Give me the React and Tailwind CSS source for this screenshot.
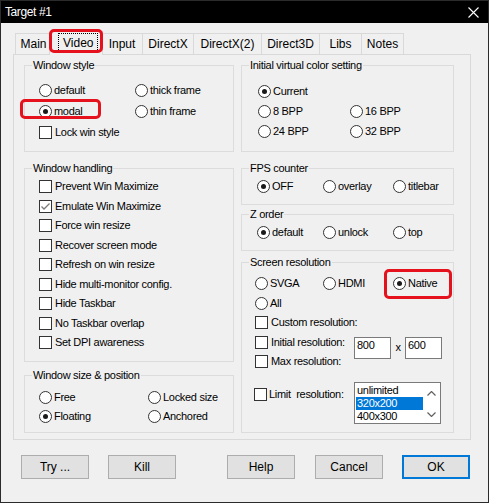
import React from 'react';

const tabs = ['Main', 'Video', 'Input', 'DirectX', 'DirectX(2)', 'Direct3D', 'Libs', 'Notes'];
const tabWidths = {
  Main: 'w-[36px]',
  Input: 'w-[41px]',
  DirectX: 'w-[51px]',
  'DirectX(2)': 'w-[68px]',
  Direct3D: 'w-[58px]',
  Libs: 'w-[42px]',
  Notes: 'w-[43px] border-r',
};

const handling = [
  ['Prevent Win Maximize', false],
  ['Emulate Win Maximize', true],
  ['Force win resize', false],
  ['Recover screen mode', false],
  ['Refresh on win resize', false],
  ['Hide multi-monitor config.', false],
  ['Hide Taskbar', false],
  ['No Taskbar overlap', false],
  ['Set DPI awareness', false],
];

function Radio({ on, label }) {
  return (
    <div className="flex items-center gap-[2px]">
      <span className="flex h-[13px] w-[13px] shrink-0 items-center justify-center rounded-full border border-[#333] bg-white">
        {on && <span className="h-[5px] w-[5px] rounded-full bg-[#1a1a1a]" />}
      </span>
      <span className="whitespace-pre">{label}</span>
    </div>
  );
}

function Check({ on, label, wide }) {
  return (
    <div className="flex items-center gap-[3px]">
      <span className="flex h-[13px] w-[13px] shrink-0 items-center justify-center border border-[#333] bg-white">
        {on && (
          <svg width="11" height="11" viewBox="0 0 11 11">
            <path d="M1.5 5.5 L4 8 L9.5 2.5" fill="none" stroke="#7a7a7a" strokeWidth="1.3" />
          </svg>
        )}
      </span>
      <span className={`whitespace-pre ${wide || ''}`}>{label}</span>
    </div>
  );
}

function Group({ title, className, children }) {
  return (
    <div className={`relative border border-[#dcdcdc] ${className}`}>
      <span className="absolute -top-[7px] left-[7px] bg-[#f0f0f0] px-[1px] leading-[13px]">{title}</span>
      {children}
    </div>
  );
}

function Button({ label, primary, className = '' }) {
  return (
    <div
      className={`flex h-[24px] w-[68px] items-center justify-center bg-[#e1e1e1] text-[12px] ${
        primary ? 'border-2 border-[#0078d7]' : 'border border-[#adadad]'
      } ${className}`}
    >
      {label}
    </div>
  );
}

function Chevron({ down }) {
  return (
    <svg width="9" height="5" viewBox="0 0 9 5">
      <path
        d={down ? 'M0.5 0.5 L4.5 4.5 L8.5 0.5' : 'M0.5 4.5 L4.5 0.5 L8.5 4.5'}
        fill="none"
        stroke="#606060"
        strokeWidth="1.2"
      />
    </svg>
  );
}

export default function App() {
  return (
    <div className="flex h-[503px] w-[489px] flex-col border border-[#2b2b2b] bg-[#f0f0f0] font-['Liberation_Sans',Arial,sans-serif] text-black">
      {/* title bar */}
      <div className="flex h-[22px] shrink-0 items-center justify-between bg-black pl-[4px] pr-[9px] text-white">
        <span className="text-[12px] tracking-[-0.4px]">Target #1</span>
        <svg width="11" height="11" viewBox="0 0 11 11">
          <path d="M0.5 0.5 L10.5 10.5 M10.5 0.5 L0.5 10.5" stroke="#fff" strokeWidth="1.1" />
        </svg>
      </div>

      <div className="flex flex-1 flex-col pt-[10px]">
        {/* tab strip */}
        <div className="ml-[14px] flex h-[21px] items-start text-[12px]">
          {tabs.map((t) =>
            t === 'Video' ? (
              <div
                key={t}
                className="relative z-10 -mx-[2px] -mt-[2px] flex h-[24px] w-[54px] items-start border-x border-t border-[#d9d9d9] bg-[#f0f0f0] pl-[8px] pt-[1px]"
              >
                <span className="flex h-[19px] items-center border border-dotted border-black px-[4px]">{t}</span>
                <span className="absolute -left-px -top-[3px] h-[24px] w-[54px] rounded-[5px] border-[3px] border-[#e5121d]" />
              </div>
            ) : (
              <div
                key={t}
                className={`flex h-[21px] items-center justify-center border-l border-t border-[#d9d9d9] ${tabWidths[t]}`}
              >
                {t}
              </div>
            ),
          )}
        </div>

        {/* tab page */}
        <div className="ml-[12px] flex h-[386px] w-[458px] gap-[7px] border border-[#d9d9d9] pl-[10px] pt-[10px] text-[11px] leading-[13px] tracking-[-0.3px]">
          <div className="flex w-[210px] flex-col">
            <Group title="Window style" className="h-[87px]">
              <div className="grid auto-rows-[21px] grid-cols-[96px_1fr] items-center pl-[14px] pt-[14px]">
                <Radio label="default" />
                <Radio label="thick frame" />
                <Radio on label="modal" />
                <Radio label="thin frame" />
                <Check label="Lock win style" />
              </div>
              <span className="absolute -left-[5px] top-[33px] h-[20px] w-[81px] rounded-[5px] border-[3px] border-[#e5121d]" />
            </Group>

            <Group title="Window handling" className="mt-[16px] h-[194px]">
              <div className="flex flex-col pl-[14px] pt-[8px]">
                {handling.map(([label, on]) => (
                  <div key={label} className="flex h-[19.5px] items-center">
                    <Check on={on} label={label} />
                  </div>
                ))}
              </div>
            </Group>

            <Group title="Window size & position" className="mt-[13px] h-[58px]">
              <div className="grid auto-rows-[19px] grid-cols-[109px_1fr] items-center pl-[14px] pt-[12px]">
                <Radio label="Free" />
                <Radio label="Locked size" />
                <Radio on label="Floating" />
                <Radio label="Anchored" />
              </div>
            </Group>
          </div>

          <div className="flex w-[213px] flex-col">
            <Group title="Initial virtual color setting" className="h-[87px]">
              <div className="grid auto-rows-[20px] grid-cols-[92px_1fr] items-center pl-[16px] pt-[15px]">
                <Radio on label="Current" />
                <span />
                <Radio label="8 BPP" />
                <Radio label="16 BPP" />
                <Radio label="24 BPP" />
                <Radio label="32 BPP" />
              </div>
            </Group>

            <Group title="FPS counter" className="mt-[16px] h-[37px]">
              <div className="grid h-[19px] grid-cols-[66px_70px_1fr] items-center pl-[15px] mt-[8px]">
                <Radio on label="OFF" />
                <Radio label="overlay" />
                <Radio label="titlebar" />
              </div>
            </Group>

            <Group title="Z order" className="mt-[9px] h-[37px]">
              <div className="grid h-[19px] grid-cols-[66px_70px_1fr] items-center pl-[15px] mt-[8px]">
                <Radio on label="default" />
                <Radio label="unlock" />
                <Radio label="top" />
              </div>
            </Group>

            <Group title="Screen resolution" className="mt-[11px] h-[171px]">
              <div className="flex flex-col pl-[13px] pt-[11px]">
                <div className="grid h-[19.5px] grid-cols-[68px_70px_1fr] items-center">
                  <Radio label="SVGA" />
                  <Radio label="HDMI" />
                  <Radio on label="Native" />
                </div>
                <div className="flex h-[19.5px] items-center">
                  <Radio label="All" />
                </div>
                <div className="flex h-[19.5px] items-center">
                  <Check label="Custom resolution:" />
                </div>
                <div className="flex h-[19.5px] items-center">
                  <Check label="Initial resolution:" wide="w-[83px]" />
                  <div className="mt-[11px] flex items-center">
                    <div className="h-[22px] w-[37px] border border-[#7a7a7a] bg-white pl-[2px] pt-[1px]">800</div>
                    <span className="w-[14px] text-center">x</span>
                    <div className="h-[22px] w-[37px] border border-[#7a7a7a] bg-white pl-[2px] pt-[1px]">600</div>
                  </div>
                </div>
                <div className="flex h-[19.5px] items-center">
                  <Check label="Max resolution:" />
                </div>
                <div className="-ml-px mt-[10.5px] flex items-start">
                  <div className="mt-[5.5px] flex items-center gap-[2px]">
                    <span className="h-[13px] w-[13px] border border-[#333] bg-white" />
                    <span className="w-[85px] whitespace-pre">Limit  resolution:</span>
                  </div>
                  <div className="flex h-[42px] w-[87px] border border-[#7a7a7a] bg-white">
                    <div className="flex flex-1 flex-col pt-px">
                      <div className="h-[13px] pl-[2px]">unlimited</div>
                      <div className="ml-px h-[13px] bg-[#0078d7] pl-px text-white">320x200</div>
                      <div className="h-[13px] pl-[2px]">400x300</div>
                    </div>
                    <div className="flex w-[17px] flex-col items-center justify-between pb-[6px] pt-[8px]">
                      <Chevron />
                      <Chevron down />
                    </div>
                  </div>
                </div>
              </div>
              <span className="absolute left-[142px] top-[6px] h-[30px] w-[68px] rounded-[5px] border-[3px] border-[#e5121d]" />
            </Group>
          </div>
        </div>

        {/* dialog buttons */}
        <div className="mt-[15px] flex pl-[20px]">
          <Button label="Try ..." />
          <Button label="Kill" className="ml-[19px]" />
          <Button label="Help" className="ml-[51px]" />
          <Button label="Cancel" className="ml-[20px]" />
          <Button label="OK" primary className="ml-[19px]" />
        </div>
      </div>
    </div>
  );
}
